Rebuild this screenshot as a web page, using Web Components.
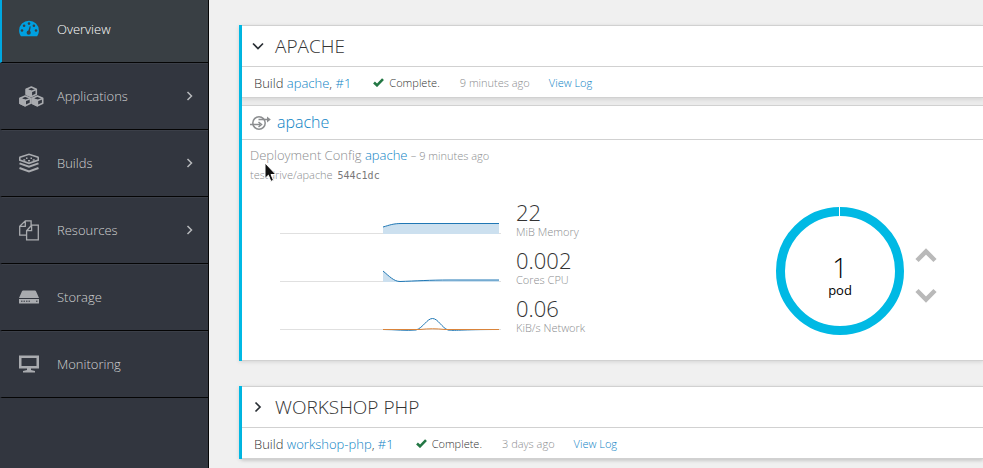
<!DOCTYPE html>
<html lang="en">
<head>
<meta charset="utf-8">
<title>Overview</title>
<style>
  body { margin: 0; background: #f0f0f0; font: 300 13px/20px "Open Sans", sans-serif; color: #333; overflow: hidden; }
</style>
</head>
<body>
<console-app>
  <side-nav slot="nav">
    <nav-item icon="dashboard" active>Overview</nav-item>
    <nav-item icon="cubes" more>Applications</nav-item>
    <nav-item icon="builds" more>Builds</nav-item>
    <nav-item icon="pages" more>Resources</nav-item>
    <nav-item icon="storage">Storage</nav-item>
    <nav-item icon="screen">Monitoring</nav-item>
  </side-nav>
  <service-group name="APACHE" build="apache" when="9 minutes ago" open>
    <deployment-tile name="apache" when="9 minutes ago" source="testdrive/apache" commit="544c1dc">
      <metric-row kind="memory" value="22" unit="MiB Memory"></metric-row>
      <metric-row kind="cpu" value="0.002" unit="Cores CPU"></metric-row>
      <metric-row kind="network" value="0.06" unit="KiB/s Network"></metric-row>
      <pod-donut slot="pods" count="1"></pod-donut>
    </deployment-tile>
  </service-group>
  <service-group name="WORKSHOP PHP" build="workshop-php" when="3 days ago"></service-group>
</console-app>

<script>
const ICONS = {
  dashboard: `<svg width="20" height="18" viewBox="0 0 20 18"><path fill="currentColor" d="M10 .7A9.9 9.9 0 0 0 .1 10.600c0 1.900.5 3.700 1.500 5.200.2.400.5.500.8.500h15.200c.3 0 .6-.1.800-.5 1-1.500 1.500-3.300 1.500-5.200A9.900 9.900 0 0 0 10 .7z"/><g fill="#393f44"><circle cx="3" cy="10.500" r="1.300"/><circle cx="5.100" cy="5.700" r="1.300"/><circle cx="10" cy="3.600" r="1.300"/><circle cx="14.900" cy="5.700" r="1.300"/><circle cx="17" cy="10.500" r="1.300"/><circle cx="9.700" cy="12.700" r="2.100"/><path d="M9 12l1.700-5.700 1 .3L10.700 12.500z"/></g></svg>`,
  cubes: `<svg width="25" height="21" viewBox="0 0 25 21" fill="none" stroke="currentColor" stroke-width="1.600" stroke-linejoin="round"><path d="M7.300 3.200l5-2.200 5 2.200v5l-5 2.400-5-2.400z"/><path d="M7.300 3.400l5 2 5-2"/><path fill="currentColor" d="M7.300 3.400l5 2v5.200l-5-2.400z"/><path d="M1 12.300l5.200-2.300 5.300 2.300v5l-5.300 2.500L1 17.300z"/><path d="M1 12.500l5.200 2 5.300-2"/><path fill="currentColor" d="M1 12.500l5.200 2v5.300L1 17.300z"/><path d="M13.200 12.300l5.200-2.300 5.300 2.300v5l-5.300 2.500-5.200-2.500z"/><path d="M13.200 12.500l5.200 2 5.300-2"/><path fill="currentColor" d="M13.200 12.500l5.200 2v5.300l-5.200-2.500z"/></svg>`,
  builds: `<svg width="20" height="20" viewBox="0 0 20 20" fill="none" stroke="currentColor"><path stroke-width="1.500" d="M.5 5.300L1 4.200 10 1.200l9 3 .5 1.100"/><path stroke-width="1.800" d="M.6 5v2L10 10.300 19.400 7V5"/><path stroke-width="1.500" d="M4.300 7h2M9 7.800h2M13.700 7h2M7 5.200h1.500M11.500 5.200H13"/><path stroke-width="2" d="M.5 10.400L10 13.800l9.500-3.400M.5 15L10 18.400l9.500-3.400"/></svg>`,
  pages: `<svg width="20" height="21" viewBox="0 0 20 21" fill="none" stroke="currentColor" stroke-width="1.300"><path d="M7.500 15.200H.7V6.300L6.300.8h5.800v5M6.300.8v5.500H.7M7.600 10.700l5-5.500h6.700v14.600H7.600zM12.600 5.200v5.500h-5"/></svg>`,
  storage: `<svg width="20" height="14" viewBox="0 0 20 14"><path fill="currentColor" d="M4 .5h12q.6 0 .9.6L20 8H0L3.100 1.100Q3.400.5 4 .5z"/><path fill="currentColor" d="M0 9h20v4q0 .5-.5.5H.5Q0 13.500 0 13z"/><path stroke="#32363f" stroke-width="1" d="M2 11.200h1.500m1 0H6m1 0h1.500m1 0H11m6 0h1.500"/></svg>`,
  screen: `<svg width="20" height="18" viewBox="0 0 20 18"><path fill="currentColor" fill-rule="evenodd" d="M0 .5h20v13H0zM2.500 3v8h15V3zM8 13.500h4v1.500l4 1v1.500H4V16l4-1z"/></svg>`
};

/* Fills an open shadow root with the element's styles and markup. */
function paint(el, css, html) {
  el.attachShadow({ mode: 'open' });
  const t = document.createElement('template');
  t.innerHTML = `<style>*{box-sizing:border-box}a{color:#0d83c5;text-decoration:none}button{border:0;background:none;padding:0;margin:0;font:inherit;color:inherit;cursor:pointer}svg{display:block}${css}</style>${html}`;
  el.shadowRoot.append(t.content.cloneNode(true));
}

customElements.define('console-app', class extends HTMLElement {
  connectedCallback() {
    paint(this, `
      :host{display:grid;grid-template-columns:209px 1fr;min-height:100vh}
      main{padding:25px 0 8px 30px;display:flex;flex-direction:column;gap:25px;min-width:0}
    `, `<slot name="nav"></slot><main><slot></slot></main>`);
  }
});

customElements.define('side-nav', class extends HTMLElement {
  connectedCallback() {
    paint(this, `
      :host{display:block;background:#32363f;border-right:1px solid #050505}
      nav{margin-top:-4px}
    `, `<nav><slot></slot></nav>`);
  }
});

customElements.define('nav-item', class extends HTMLElement {
  connectedCallback() {
    paint(this, `
      :host{display:block}
      a{display:grid;grid-template-columns:26px 1fr auto;column-gap:12px;align-items:center;height:67px;
        padding:0 14px 0 17px;border-left:2px solid transparent;border-bottom:1px solid #050505;
        box-shadow:inset 0 1px #3b3f48;color:#d1d1d1}
      .icon{color:#a9abaf}
      :host([active]) a{background:#393f44;border-left-color:#00a8e1;color:#fff}
      :host([active]) .icon{color:#00a0e0}
    `, `<a href="#"><span class="icon">${ICONS[this.getAttribute('icon')]}</span><slot></slot>
      ${this.hasAttribute('more') ? '<svg width="8" height="12" viewBox="0 0 8 12" fill="none" stroke="#b8babd" stroke-width="1.500"><path d="M1.500 2L5.500 6l-4 4"/></svg>' : ''}</a>`);
  }
});

customElements.define('service-group', class extends HTMLElement {
  connectedCallback() {
    const open = this.hasAttribute('open');
    const a = n => this.getAttribute(n);
    paint(this, `
      :host{display:flex;flex-direction:column;gap:7px;border-left:3px solid #00b9e4;box-shadow:0 1px 4px rgba(0,0,0,.12);background:#ebebeb}
      section{background:#fff;border:solid #d1d1d1;border-width:1px 0;box-shadow:0 2px 3px rgba(0,0,0,.08)}
      header{border-bottom:1px solid #d1d1d1}
      h2{margin:0;font-size:19px;font-weight:300;line-height:40px}
      h2 button{display:flex;align-items:center;gap:10px;padding-left:10px}
      .build{display:flex;align-items:center;height:30px;padding:1px 12px 0;white-space:nowrap}
      .state{display:flex;align-items:center;gap:5px;margin-left:22px}
      small{font-size:11px}
      .when{margin-left:20px;color:#8b8d8f}
      .log{margin-left:19px;font-size:11px}
    `, `<section><header><h2><button aria-expanded="${open}">
        <svg width="13" height="12" viewBox="0 0 13 12" fill="none" stroke="#292e34" stroke-width="1.700"><path d="${open ? 'M1 3.500l5 5 5-5' : 'M3.500 1.500L8 6l-4.500 4.500'}"/></svg>
        ${a('name')}</button></h2></header>
      <div class="build"><span>Build <a href="#">${a('build')}</a>, <a href="#">#1</a></span>
        <span class="state"><svg width="11" height="9" viewBox="0 0 11 9" fill="none" stroke="#237744" stroke-width="2.600"><path d="M1 4.500l3 2.800L10 1.200"/></svg><small>Complete.</small></span>
        <small class="when">${a('when')}</small><a class="log" href="#">View Log</a></div></section>
      <slot></slot>`);
  }
});

customElements.define('deployment-tile', class extends HTMLElement {
  connectedCallback() {
    const a = n => this.getAttribute(n);
    paint(this, `
      :host{display:block;background:#fff;border:solid #d1d1d1;border-width:1px 0}
      header{display:flex;align-items:center;gap:6px;height:34px;padding:0 8px;border-bottom:1px solid #d1d1d1}
      h3{margin:0;font-size:16px;font-weight:300;line-height:30px;padding-bottom:2px}
      .info{position:relative;padding:6px 8px 0;color:#8b8d8f}
      p{margin:0;height:20px;line-height:18px}
      p+p{height:18px;line-height:18px;font-size:11px}
      small{font-size:11px;line-height:1}
      code{font:400 10px/1 "DejaVu Sans Mono",monospace;color:#777;margin-left:2px}
      .cursor{position:absolute;left:22px;top:22px}
      .body{display:flex;align-items:flex-start;padding:17px 46px 23px 38px}
      .metrics{flex:1;display:grid;row-gap:8px}
    `, `<header><svg width="21" height="17" viewBox="0 0 21 17" fill="none" stroke="#8b8d8f" stroke-width="1.500"><circle cx="9" cy="9" r="6.200"/><path d="M0 10.500h10M8.500 8l3 2.500-3 2.500M8.500 5.500H18"/><path fill="#8b8d8f" stroke="none" d="M17 2.500l3.800 3-3.800 3z"/></svg>
      <h3><a href="#">${a('name')}</a></h3></header>
      <div class="info"><p>Deployment Config <a href="#">${a('name')}</a> <small>– ${a('when')}</small></p>
      <p>${a('source')} <code>${a('commit')}</code></p>
      <svg class="cursor" width="14" height="21" viewBox="0 0 14 21"><path d="M1 1v15.500l3.400-3.300 2.500 6.200 2.600-1.100L7 12.500h4.900z" fill="#111" stroke="#fff"/></svg></div>
      <div class="body"><div class="metrics"><slot></slot></div><slot name="pods"></slot></div>`);
  }
});

const CHARTS = {
  memory: `<path fill="#cce0ef" d="M103 27C110 25 113 23.500 122 23.500H219V34H103z"/><path stroke="#1f77b4" d="M103 27C110 25 113 23.500 122 23.500H219"/>`,
  cpu: `<path fill="#cce0ef" d="M103 23C109 28 114 33.500 120 33.500C140 32.500 160 32 219 32V34H103z"/><path stroke="#1f77b4" d="M103 23C109 28 114 33.500 120 33.500C135 33 150 32 170 32H219"/>`,
  network: `<path stroke="#1f77b4" d="M103 33.500C115 33.500 126 35 136 34C143 32 147 22.500 152.500 22.500C158 22.500 162 32 168 34C174 35 180 33.500 219 33.500"/><path stroke="#d9843b" d="M103 33.500H140C149 32.500 156 32.500 165 33.500H219"/>`
};

customElements.define('metric-row', class extends HTMLElement {
  connectedCallback() {
    paint(this, `
      :host{display:flex;gap:15px;height:40px}
      strong,span{display:block;white-space:nowrap}
      strong{font-size:22px;font-weight:300;line-height:22px}
      span{font-size:11px;line-height:18px;color:#8b8d8f}
    `, `<svg width="221" height="40" viewBox="0 1 221 40" fill="none"><path stroke="#e0e0e0" d="M0 33.500H221"/>${CHARTS[this.getAttribute('kind')]}</svg>
      <div><strong>${this.getAttribute('value')}</strong><span>${this.getAttribute('unit')}</span></div>`);
  }
});

customElements.define('pod-donut', class extends HTMLElement {
  connectedCallback() {
    paint(this, `
      :host{display:flex;align-items:center;gap:10px;margin-top:5px}
      .ring{display:grid;place-items:center}
      .ring>*{grid-area:1/1}
      .label{text-align:center;color:#000;padding-top:12px}
      strong{display:block;font-size:27px;font-weight:300;line-height:26px}
      .label span{display:block;font-weight:400;line-height:18px}
      .scale{display:grid;row-gap:25px;padding-top:9px}
    `, `<div class="ring"><svg width="130" height="130" viewBox="0 0 130 130"><circle cx="65" cy="65" r="59.500" fill="none" stroke="#00b9e4" stroke-width="9"/><path stroke="#fff" d="M64.500 0v11"/></svg>
      <div class="label"><strong>${this.getAttribute('count')}</strong><span>pod</span></div></div>
      <div class="scale"><button aria-label="Scale up"><svg width="22" height="15" viewBox="0 0 22 15" fill="none" stroke="#b9b9b9" stroke-width="4.500"><path d="M2 12.500l9-9 9 9"/></svg></button>
      <button aria-label="Scale down"><svg width="22" height="15" viewBox="0 0 22 15" fill="none" stroke="#b9b9b9" stroke-width="4.500"><path d="M2 2.500l9 9 9-9"/></svg></button></div>`);
  }
});
</script>
</body>
</html>
